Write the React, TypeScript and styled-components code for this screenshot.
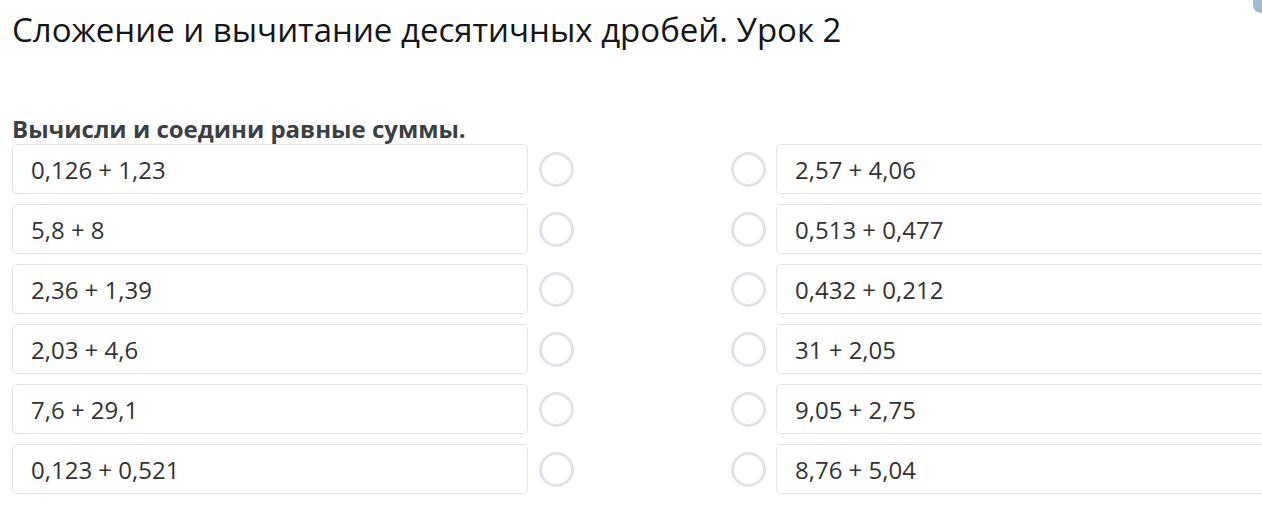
import styled, { createGlobalStyle } from 'styled-components'

const GlobalStyle = createGlobalStyle`
  html, body {
    margin: 0;
    padding: 0;
    background: #fff;
    overflow: hidden;
  }
  body {
    font-family: "Open Sans", "Liberation Sans", sans-serif;
  }
`

const Page = styled.div`
  position: relative;
  width: 1262px;
  height: 526px;
  padding: 7px 0 0 12px;
  box-sizing: border-box;
`
const Title = styled.h1`
  margin: 0;
  font-size: 33px;
  line-height: 45px;
  font-weight: 400;
  color: #161616;
  white-space: nowrap;
`
const Task = styled.div`
  margin-top: 61px;
  font-size: 24px;
  line-height: 31px;
  font-weight: 700;
  color: #3b4045;
  white-space: nowrap;
`
const Rows = styled.div`
  display: flex;
  flex-direction: column;
  gap: 10px;
`
const Row = styled.div`
  display: flex;
  align-items: center;
  gap: 157px;
`
const Pair = styled.div<{ $gap: number }>`
  display: flex;
  align-items: center;
  gap: ${p => p.$gap}px;
  flex-shrink: 0;
`
const Card = styled.div`
  width: 516px;
  height: 50px;
  box-sizing: border-box;
  border: 1px solid #e2e3e5;
  border-radius: 5px;
  display: flex;
  align-items: center;
  padding: 1px 0 0 18px;
  font-size: 24px;
  color: #333;
  flex-shrink: 0;
`
const Dot = styled.div`
  width: 35px;
  height: 35px;
  box-sizing: border-box;
  border: 3px solid #e1e4e8;
  border-radius: 50%;
  flex-shrink: 0;
`
const CornerTab = styled.div`
  position: absolute;
  top: 0;
  right: 0;
  width: 9px;
  height: 13px;
  background: #a4b9ce;
  border-bottom-left-radius: 8px;
`

const left = ['0,126 + 1,23', '5,8 + 8', '2,36 + 1,39', '2,03 + 4,6', '7,6 + 29,1', '0,123 + 0,521']
const right = ['2,57 + 4,06', '0,513 + 0,477', '0,432 + 0,212', '31 + 2,05', '9,05 + 2,75', '8,76 + 5,04']

export default function App() {
  return (
    <Page>
      <GlobalStyle />
      <CornerTab />
      <Title>Сложение и вычитание десятичных дробей. Урок 2</Title>
      <Task>Вычисли и соедини равные суммы.</Task>
      <Rows>
        {left.map((item, i) => (
          <Row key={item}>
            <Pair $gap={11}>
              <Card>{item}</Card>
              <Dot />
            </Pair>
            <Pair $gap={10}>
              <Dot />
              <Card>{right[i]}</Card>
            </Pair>
          </Row>
        ))}
      </Rows>
    </Page>
  )
}
